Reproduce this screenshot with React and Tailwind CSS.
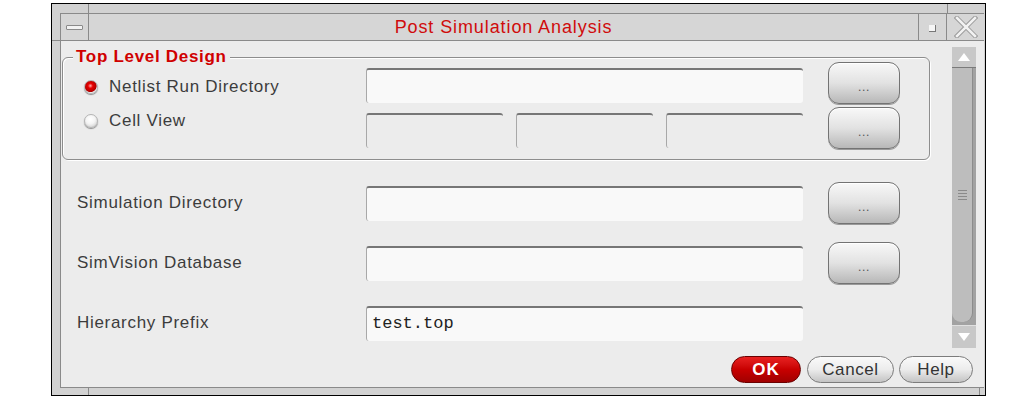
import React from "react";

const font = "font-['Liberation_Sans',Arial,sans-serif]";

const Radio = ({ checked }) => (
  <span
    className={`inline-block w-[14px] h-[14px] rounded-full border border-[#b4b4b4] shadow-[0_1px_1px_#8c8c8c] ${
      checked
        ? "bg-[radial-gradient(circle_at_45%_40%,#ffb0b0_0,#e80000_25%,#b00000_60%,#f0f0f0_68%,#d0d0d0_100%)]"
        : "bg-[radial-gradient(circle_at_45%_35%,#ffffff_0,#f4f4f4_45%,#c4c4c4_100%)]"
    }`}
  />
);

const Field = ({ className = "", children, disabled }) => (
  <div
    className={`h-[35px] rounded-[3px] border-t-2 border-l border-t-[#767676] border-l-[#a8a8a8] flex items-center pl-[5px] font-['Liberation_Mono',monospace] text-[17px] text-[#222] ${
      disabled ? "bg-[#ececec]" : "bg-[#f9f9f9]"
    } ${className}`}
  >
    {children}
  </div>
);

const DotsButton = ({ className = "" }) => (
  <button
    className={`w-[72px] h-[42px] ml-[25px] rounded-[11px] border border-[#737373] bg-linear-to-b from-[#f8f8f8] via-[#e2e2e2] to-[#b8b8b8] shadow-[inset_0_1px_0_#fff,0_1px_0_#9a9a9a] flex items-center justify-center pt-[8px] text-[12px] text-[#555] ${className}`}
  >
    ...
  </button>
);

const PillButton = ({ children, className = "" }) => (
  <button
    className={`h-[27px] rounded-full border border-[#7c7c7c] bg-linear-to-b from-[#fafafa] via-[#ececec] to-[#c4c4c4] text-[17px] text-[#333] tracking-[0.6px] flex items-center justify-center ${className}`}
  >
    {children}
  </button>
);

export default function App() {
  return (
    <div className={`w-[1013px] h-[400px] bg-white pl-[51px] pt-[3px] ${font}`}>
      <div className="w-[935px] h-[393px] border border-black bg-[#d2d2d2] flex flex-col">
        {/* top frame */}
        <div className="h-[9px] flex">
          <div className="w-[36px]" />
          <div className="flex-1 border-l border-[#8a8a8a]" />
          <div className="w-[38px] border-l border-[#8a8a8a]" />
        </div>

        <div className="flex-1 flex min-h-0">
          <div className="w-[8px]">
            <div className="h-[28px] border-b border-[#8a8a8a]" />
          </div>

          <div className="flex-1 flex flex-col">
            {/* title bar */}
            <div className="h-[28px] flex border-y border-l border-[#8a8a8a] bg-[#d6d6d6]">
              <div className="w-[28px] border-r border-[#8a8a8a] flex items-center justify-center">
                <span className="w-[17px] h-[5px] rounded-[1px] border border-[#8a8a8a] bg-[#f2f2f2]" />
              </div>
              <div className="flex-1 flex items-center justify-center text-[18px] tracking-[0.9px] text-[#d00c0c]">
                Post Simulation Analysis
              </div>
              <div className="w-[28px] border-l border-[#8a8a8a] flex items-center justify-center pt-[2px]">
                <span className="w-[7px] h-[7px] bg-[#f6f6f6] border-r border-b border-[#777]" />
              </div>
              <div className="w-[38px] border-l border-[#8a8a8a] flex items-center justify-center">
                <svg width="24" height="22" viewBox="0 0 24 22">
                  <path d="M3 2 L21 20 M21 2 L3 20" stroke="#9a9a9a" strokeWidth="4.5" strokeLinecap="square" />
                  <path d="M3 2 L21 20 M21 2 L3 20" stroke="#f2f2f2" strokeWidth="2.5" strokeLinecap="square" />
                </svg>
              </div>
            </div>

            {/* content */}
            <div className="flex-1 bg-[#ececec] border-l border-b border-[#8a8a8a] flex flex-col text-[#3c3c3c] text-[17px] tracking-[0.7px]">
              <div className="h-[306px] flex pr-[8px]">
                <div className="flex-1 pl-[1px]">
                  {/* group */}
                  <div className="mt-[16px] w-[868px] border border-[#8d8d8d] rounded-[6px] shadow-[inset_1px_1px_0_#fff,1px_1px_0_#fff] pb-[10px]">
                    <div className="-mt-[11px] -mb-[5px] ml-[10px] h-[20px] w-fit px-[3px] bg-[#ececec] leading-[20px] font-bold tracking-[0.7px] text-[#d00000]">
                      Top Level Design
                    </div>
                    <div className="flex h-[45px] items-start">
                      <div className="w-[303px] h-[20px] mt-[15px] pl-[21px] flex items-center gap-[11px]">
                        <Radio checked />
                        <span>Netlist Run Directory</span>
                      </div>
                      <Field className="mt-[6px] w-[437px]" />
                      <DotsButton />
                    </div>
                    <div className="flex h-[42px] items-start">
                      <div className="w-[303px] h-[20px] mt-[4px] pl-[21px] flex items-center gap-[11px]">
                        <Radio />
                        <span>Cell View</span>
                      </div>
                      <div className="mt-[6px] w-[437px] flex gap-[13px]">
                        <Field disabled className="w-[137px] h-[34px]" />
                        <Field disabled className="w-[137px] h-[34px]" />
                        <Field disabled className="w-[137px] h-[34px]" />
                      </div>
                      <DotsButton />
                    </div>
                  </div>

                  <div className="mt-[22px] flex h-[42px] items-center">
                    <div className="w-[304px] pl-[15px]">Simulation Directory</div>
                    <Field className="w-[437px]" />
                    <DotsButton />
                  </div>
                  <div className="mt-[18px] flex h-[42px] items-center">
                    <div className="w-[304px] pl-[15px]">SimVision Database</div>
                    <Field className="w-[437px]" />
                    <DotsButton />
                  </div>
                  <div className="mt-[18px] flex h-[42px] items-center">
                    <div className="w-[304px] pl-[15px]">Hierarchy Prefix</div>
                    <Field className="w-[437px] tracking-normal">test.top</Field>
                  </div>
                </div>

                {/* scrollbar */}
                <div className="mt-[6px] w-[24px] h-[301px] bg-[#a2a2a2] flex flex-col">
                  <div className="h-[21px] bg-[#c8c8c8] border-b border-[#7a7a7a] flex items-center justify-center">
                    <svg width="12" height="8" viewBox="0 0 12 8">
                      <polygon points="6,0 12,8 0,8" fill="#fff" />
                    </svg>
                  </div>
                  <div className="flex-1">
                    <div className="w-[21px] h-[254px] bg-[#bdbdbd] rounded-b-[9px] border-r border-[#8c8c8c] flex flex-col items-center justify-center gap-[2px]">
                      <span className="w-[9px] h-px bg-[#8a8a8a]" />
                      <span className="w-[9px] h-px bg-[#8a8a8a]" />
                      <span className="w-[9px] h-px bg-[#8a8a8a]" />
                      <span className="w-[9px] h-px bg-[#8a8a8a]" />
                    </div>
                  </div>
                  <div className="h-[23px] bg-[#c8c8c8] border-t border-[#e0e0e0] flex items-center justify-center">
                    <svg width="12" height="8" viewBox="0 0 12 8">
                      <polygon points="0,0 12,0 6,8" fill="#fff" />
                    </svg>
                  </div>
                </div>
              </div>

              <div className="mt-[9px] flex justify-end pr-[11px]">
                <button className="w-[70px] h-[27px] rounded-full border border-[#6a0000] bg-linear-to-b from-[#e82020] via-[#c80000] to-[#a00000] text-white font-bold text-[17px] tracking-[1px] flex items-center justify-center">
                  OK
                </button>
                <PillButton className="w-[87px] ml-[6px]">Cancel</PillButton>
                <PillButton className="w-[74px] ml-[5px]">Help</PillButton>
              </div>
            </div>
          </div>

          <div className="w-px" />
        </div>

        {/* bottom frame */}
        <div className="h-[7px] flex">
          <div className="w-[36px]" />
          <div className="flex-1 border-l border-[#8a8a8a]" />
          <div className="w-[6px] border-l border-[#8a8a8a]" />
        </div>
      </div>
    </div>
  );
}
